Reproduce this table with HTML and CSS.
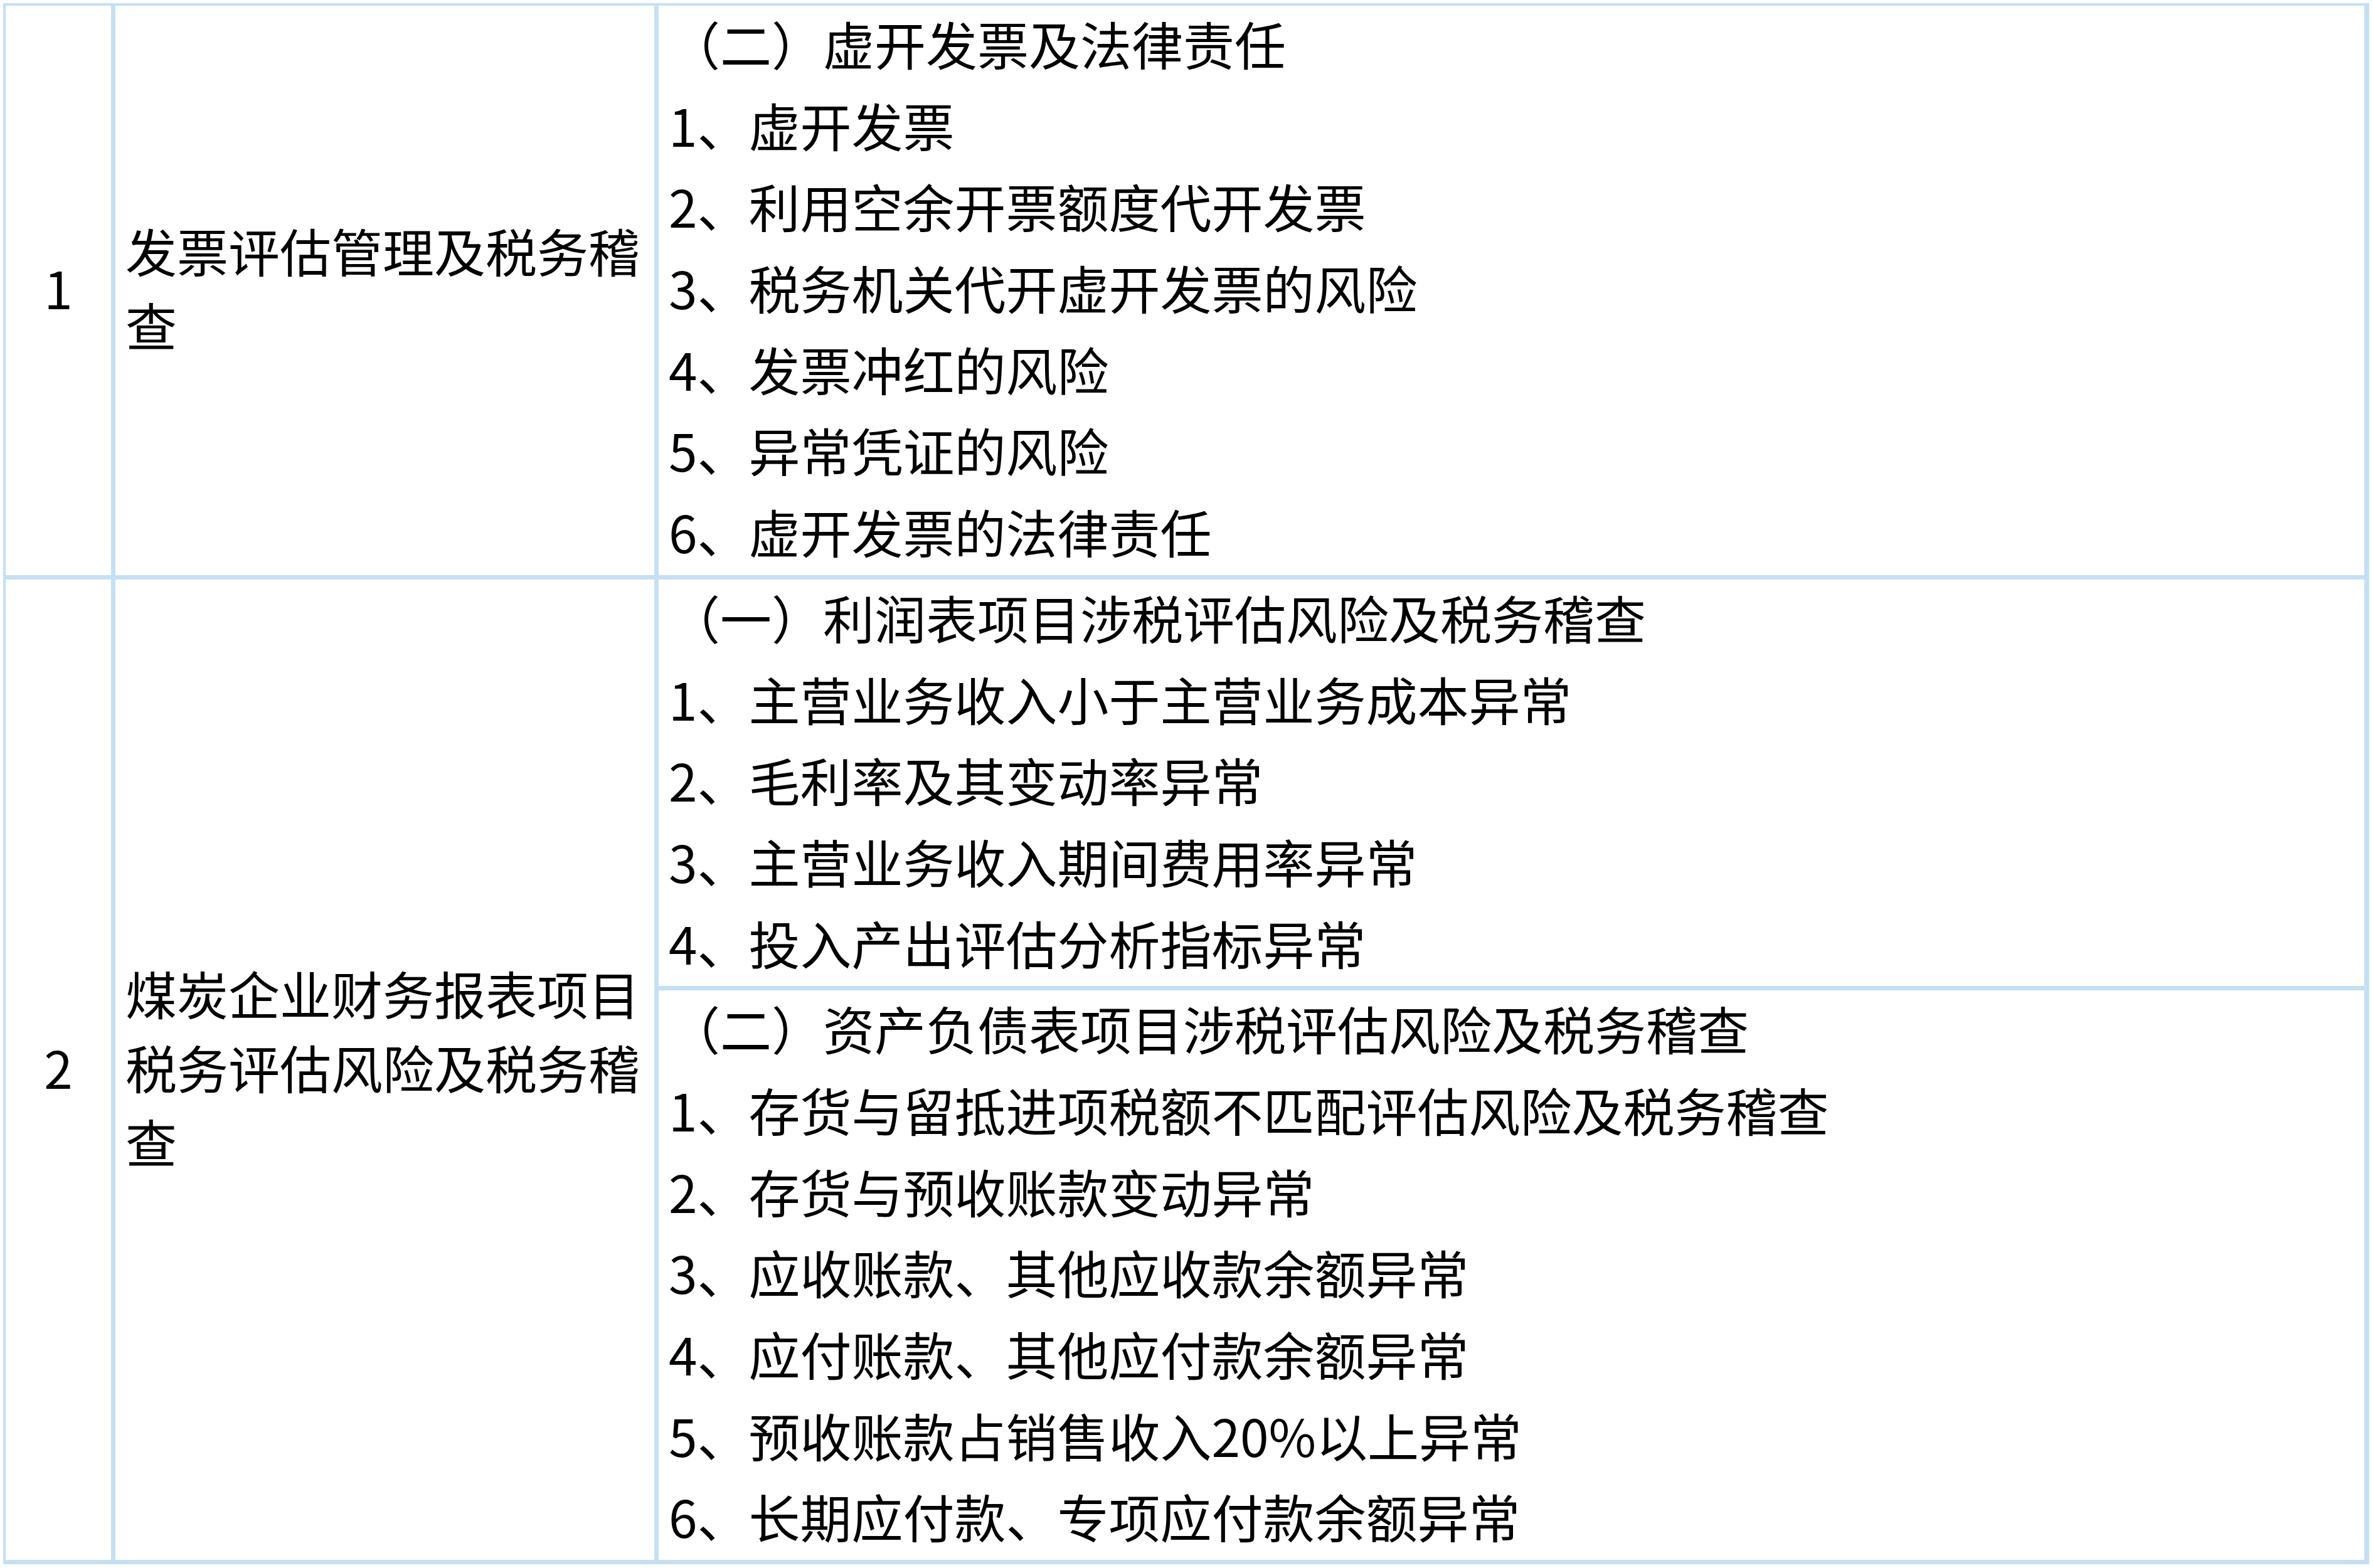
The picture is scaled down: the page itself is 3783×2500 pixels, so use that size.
FILE: index.html
```html
<!DOCTYPE html>
<html lang="zh-CN">
<head>
<meta charset="utf-8">
<title>税务稽查课程</title>
<link rel="stylesheet" href="styles.css">
</head>
<body>
<div class="table">
  <div class="cell num">1</div>
  <div class="cell topic">发票评估管理及税务稽查</div>
  <div class="cell items">
    <div class="section">
      <p>（二）虚开发票及法律责任</p>
      <p>1、虚开发票</p>
      <p>2、利用空余开票额度代开发票</p>
      <p>3、税务机关代开虚开发票的风险</p>
      <p>4、发票冲红的风险</p>
      <p>5、异常凭证的风险</p>
      <p>6、虚开发票的法律责任</p>
    </div>
  </div>

  <div class="cell num">2</div>
  <div class="cell topic">煤炭企业财务报表项目税务评估风险及税务稽查</div>
  <div class="cell items">
    <div class="section">
      <p>（一）利润表项目涉税评估风险及税务稽查</p>
      <p>1、主营业务收入小于主营业务成本异常</p>
      <p>2、毛利率及其变动率异常</p>
      <p>3、主营业务收入期间费用率异常</p>
      <p>4、投入产出评估分析指标异常</p>
    </div>
    <div class="section">
      <p>（二）资产负债表项目涉税评估风险及税务稽查</p>
      <p>1、存货与留抵进项税额不匹配评估风险及税务稽查</p>
      <p>2、存货与预收账款变动异常</p>
      <p>3、应收账款、其他应收款余额异常</p>
      <p>4、应付账款、其他应付款余额异常</p>
      <p>5、预收账款占销售收入20%以上异常</p>
      <p>6、长期应付款、专项应付款余额异常</p>
    </div>
  </div>
</div>
</body>
</html>
```
FILE: styles.css
```css
html, body {
  margin: 0;
  padding: 0;
  background: #ffffff;
}

body {
  font-family: "Noto Sans CJK SC", "Microsoft YaHei", sans-serif;
  color: #000000;
  font-size: 82px;
}

.table {
  margin: 5px 0 0 5px;
  width: 3772px;
  display: grid;
  grid-template-columns: 168px 859px 2719px;
  column-gap: 7px;
  row-gap: 7px;
  background: #c5e0f3;
  padding: 4px 7px 7px 4px;
  box-sizing: border-box;
}

.cell {
  background: #ffffff;
}

.num {
  display: flex;
  align-items: center;
  justify-content: center;
  line-height: 118px;
  padding-bottom: 9px;
}

.topic {
  display: flex;
  align-items: center;
  padding: 0 16px 9px 16px;
  line-height: 118px;
}

.items {
  display: flex;
  flex-direction: column;
  gap: 7px;
  background: #c5e0f3;
}

.section {
  background: #ffffff;
  padding-left: 16px;
}

.section p {
  margin: 0;
  line-height: 120.5px;
  padding-bottom: 9.2px;
  white-space: nowrap;
}
```
